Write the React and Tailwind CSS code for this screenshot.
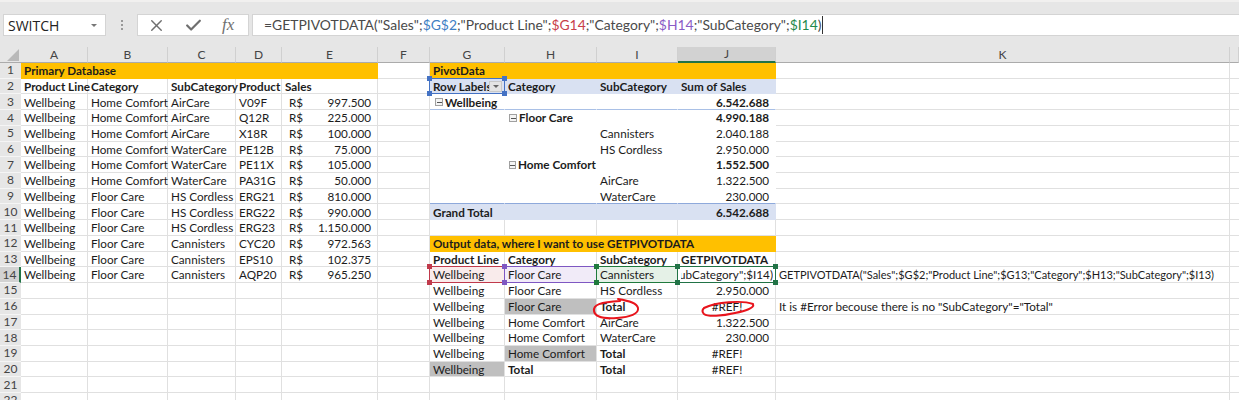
import React from 'react';
import { X, Check } from 'lucide-react';

const COLS = ['A', 'B', 'C', 'D', 'E', 'F', 'G', 'H', 'I', 'J', 'K', ''];
const YELLOW = 'bg-[#ffc000] border-b-[#ffc000] border-r-[#ffc000]';
const PIVOT = 'bg-[#d9e1f2] border-b-[#d9e1f2] border-r-[#d9e1f2]';
const BLANK = 'border-b-white border-r-white';
const GRAY = 'bg-[#bfbfbf]';

const left = [
  ['Wellbeing', 'Home Comfort', 'AirCare', 'V09F', '997.500'],
  ['Wellbeing', 'Home Comfort', 'AirCare', 'Q12R', '225.000'],
  ['Wellbeing', 'Home Comfort', 'AirCare', 'X18R', '100.000'],
  ['Wellbeing', 'Home Comfort', 'WaterCare', 'PE12B', '75.000'],
  ['Wellbeing', 'Home Comfort', 'WaterCare', 'PE11X', '105.000'],
  ['Wellbeing', 'Home Comfort', 'WaterCare', 'PA31G', '50.000'],
  ['Wellbeing', 'Floor Care', 'HS Cordless', 'ERG21', '810.000'],
  ['Wellbeing', 'Floor Care', 'HS Cordless', 'ERG22', '990.000'],
  ['Wellbeing', 'Floor Care', 'HS Cordless', 'ERG23', '1.150.000'],
  ['Wellbeing', 'Floor Care', 'Cannisters', 'CYC20', '972.563'],
  ['Wellbeing', 'Floor Care', 'Cannisters', 'EPS10', '102.375'],
  ['Wellbeing', 'Floor Care', 'Cannisters', 'AQP20', '965.250'],
];

const Handle = ({ className }) => <span className={`absolute w-[5px] h-[5px] z-10 ${className}`} />;

// four corner squares of a range picked in the formula
const Handles = ({ color }) => (
  <>
    <Handle className={`-left-[3px] -top-[3px] ${color}`} />
    <Handle className={`-right-[3px] -top-[3px] ${color}`} />
    <Handle className={`-left-[3px] -bottom-[3px] ${color}`} />
    <Handle className={`-right-[3px] -bottom-[3px] ${color}`} />
  </>
);

const Cell = ({ children, className = '' }) => (
  <div
    className={`flex items-center whitespace-nowrap pl-[3px] pr-[2px] pt-[1px] border-r border-b border-[#e0e0e0] text-[11.7px] text-[#1c1c1c] ${className}`}
  >
    {children}
  </div>
);

const Minus = () => (
  <span className="inline-flex items-center justify-center w-[8px] h-[8px] mr-[2px] border border-[#a0a0a0] bg-[#f4f4f4]">
    <span className="w-[5px] h-px bg-[#555]" />
  </span>
);

const Num = ({ children, bold }) => (
  <Cell className={`justify-end pr-[6px] ${bold ? 'font-bold' : ''}`}>{children}</Cell>
);

function pivotRow(n) {
  const line = 'border-b-[#a9c0e6]';
  const rows = {
    3: [<><Minus /><span className="font-bold">Wellbeing</span></>, '', '', '6.542.688', true],
    4: ['', <><Minus /><span className="font-bold">Floor Care</span></>, '', '4.990.188', true],
    5: ['', '', 'Cannisters', '2.040.188', false],
    6: ['', '', 'HS Cordless', '2.950.000', false],
    7: ['', <><Minus /><span className="font-bold">Home Comfort</span></>, '', '1.552.500', true],
    8: ['', '', 'AirCare', '1.322.500', false],
    9: ['', '', 'WaterCare', '230.000', false],
  };
  const [g, h, i, j, bold] = rows[n];
  const b = n === 3 ? `border-r-white ${line}` : n === 9 ? 'border-r-white border-b-[#8ea9db]' : BLANK;
  return [
    <Cell key="g" className={`${b} pl-[5px]`}>{g}</Cell>,
    <Cell key="h" className={`${b} pl-[4px]`}>{h}</Cell>,
    <Cell key="i" className={`${b} pl-[2px]`}>{i}</Cell>,
    <Cell key="j" className={`${b} justify-end pr-[6px] ${bold ? 'font-bold' : ''}`}>{j}</Cell>,
  ];
}

function outputRow(n) {
  const rows = {
    15: ['Wellbeing', 'Floor Care', 'HS Cordless', '2.950.000'],
    16: ['Wellbeing', 'Floor Care', 'Total', '#REF!'],
    17: ['Wellbeing', 'Home Comfort', 'AirCare', '1.322.500'],
    18: ['Wellbeing', 'Home Comfort', 'WaterCare', '230.000'],
    19: ['Wellbeing', 'Home Comfort', 'Total', '#REF!'],
    20: ['Wellbeing', 'Total', 'Total', '#REF!'],
  };
  const [g, h, i, j] = rows[n];
  return [
    <Cell key="g" className={n === 20 ? GRAY : ''}>{g}</Cell>,
    <Cell key="h" className={`pl-[2px] ${n === 16 || n === 19 ? GRAY : ''} ${h === 'Total' ? 'font-bold' : ''}`}>{h}</Cell>,
    <Cell key="i" className={`pl-[2px] ${i === 'Total' ? 'font-bold' : ''}`}>{i}</Cell>,
    j === '#REF!' ? (
      <Cell key="j" className="justify-center">{j}</Cell>
    ) : (
      <Num key="j">{j}</Num>
    ),
  ];
}

function rightSide(n) {
  if (n === 1) {
    return [
      <Cell key="g" className={`${YELLOW} font-bold`}>PivotData</Cell>,
      <Cell key="h" className={YELLOW} />,
      <Cell key="i" className={YELLOW} />,
      <Cell key="j" className={YELLOW} />,
    ];
  }
  if (n === 2) {
    return [
      <Cell key="g" className={`${PIVOT} relative font-bold`}>
        <span className="w-[58px] overflow-hidden">Row Labels</span>
        <span className="absolute right-[2px] top-[2px] w-[13px] h-[11px] flex items-center justify-center bg-[#e4e4e4] border border-[#c8c8c8]">
          <span className="border-x-[3px] border-x-transparent border-t-[3px] border-t-[#666]" />
        </span>
        <span className="absolute -left-px -top-px -right-px -bottom-px border border-[#4472c4]" />
        <Handles color="bg-[#4472c4]" />
      </Cell>,
      <Cell key="h" className={`${PIVOT} pl-[2px] font-bold`}>Category</Cell>,
      <Cell key="i" className={`${PIVOT} pl-[2px] font-bold`}>SubCategory</Cell>,
      <Cell key="j" className={`${PIVOT} pl-[2px] font-bold`}>Sum of Sales</Cell>,
    ];
  }
  if (n >= 3 && n <= 9) return pivotRow(n);
  if (n === 10) {
    return [
      <Cell key="g" className={`${PIVOT} font-bold border-b-[#8ea9db]`}>Grand Total</Cell>,
      <Cell key="h" className={`${PIVOT} border-b-[#8ea9db]`} />,
      <Cell key="i" className={`${PIVOT} border-b-[#8ea9db]`} />,
      <Cell key="j" className={`${PIVOT} border-b-[#8ea9db] justify-end pr-[6px] font-bold`}>6.542.688</Cell>,
    ];
  }
  if (n === 12) {
    return [
      <Cell key="g" className={`${YELLOW} relative z-10 font-bold text-[11.2px]`}>Output data, where I want to use GETPIVOTDATA</Cell>,
      <Cell key="h" className={YELLOW} />,
      <Cell key="i" className={YELLOW} />,
      <Cell key="j" className={YELLOW} />,
    ];
  }
  if (n === 13) {
    return [
      <Cell key="g" className="font-bold">Product Line</Cell>,
      <Cell key="h" className="pl-[2px] font-bold">Category</Cell>,
      <Cell key="i" className="pl-[2px] font-bold">SubCategory</Cell>,
      <Cell key="j" className="pl-[2px] font-bold">GETPIVOTDATA</Cell>,
    ];
  }
  if (n === 14) {
    return [
      <Cell key="g" className="relative bg-[#f9ebeb]">
        Wellbeing
        <span className="absolute -left-px -top-px -right-px -bottom-px border-[1.5px] border-[#c0394b]" />
        <Handles color="bg-[#c0394b]" />
      </Cell>,
      <Cell key="h" className="relative pl-[2px] bg-[#f1ebf8]">
        Floor Care
        <span className="absolute -left-px -top-px -right-px -bottom-px border-[1.5px] border-[#7e57c2]" />
        <Handles color="bg-[#7e57c2]" />
      </Cell>,
      <Cell key="i" className="relative pl-[2px] bg-[#e5f1e7]">
        Cannisters
        <span className="absolute -left-px -top-px -right-px -bottom-px border-[1.5px] border-[#1f7a3d]" />
        <Handles color="bg-[#1f7a3d]" />
      </Cell>,
      <Cell key="j" className="relative justify-end pl-[2px] pr-[2px] text-[11.4px]">
        <span className="overflow-hidden flex justify-end w-full">
          <span className="shrink-0">{'=GETPIVOTDATA("Sales";$G$2;"Product Line";$G14;"Category";$H14;"SubCategory";$I14)'}</span>
        </span>
        <span className="absolute -left-px -top-px -right-px -bottom-px border-[1.5px] border-[#217346]" />
        <Handles color="bg-[#217346]" />
      </Cell>,
    ];
  }
  if (n >= 15 && n <= 20) return outputRow(n);
  return ['g', 'h', 'i', 'j'].map((k) => <Cell key={k} />);
}

function leftSide(n) {
  if (n === 1) {
    return [
      <Cell key="a" className={`${YELLOW} relative z-10 font-bold`}>Primary Database</Cell>,
      ...['b', 'c', 'd', 'e'].map((k) => <Cell key={k} className={YELLOW} />),
    ];
  }
  if (n === 2) {
    return ['Product Line', 'Category', 'SubCategory', 'Product', 'Sales'].map((t) => (
      <Cell key={t} className="font-bold">{t}</Cell>
    ));
  }
  const r = left[n - 3];
  if (!r) return ['a', 'b', 'c', 'd', 'e'].map((k) => <Cell key={k} />);
  return [
    <Cell key="a">{r[0]}</Cell>,
    <Cell key="b">{r[1]}</Cell>,
    <Cell key="c">{r[2]}</Cell>,
    <Cell key="d">{r[3]}</Cell>,
    <Cell key="e" className="justify-between pl-[7px] pr-[6px]">
      <span>R$</span>
      <span>{r[4]}</span>
    </Cell>,
  ];
}

function Formula() {
  return (
    <span className="text-[#4a4a4a]">
      {'=GETPIVOTDATA("Sales";'}
      <span className="text-[#3f7fc4]">$G$2</span>
      {';"Product Line";'}
      <span className="text-[#c8404a]">$G14</span>
      {';"Category";'}
      <span className="text-[#8a5cc6]">$H14</span>
      {';"SubCategory";'}
      <span className="text-[#1f8a4c]">$I14</span>
      {')'}
    </span>
  );
}

function Toolbar() {
  return (
    <div className="h-[47px] bg-[#e6e6e6] border-t-2 border-[#f1f0ef] pt-[12px] pb-[11px] flex">
      <div className="ml-[3px] w-[103px] bg-white border border-[#d4d4d4] flex items-center justify-between pl-[4px] pr-[8px] text-[14px] text-[#222] font-['Open_Sans',sans-serif]">
        SWITCH
        <span className="border-x-[3px] border-x-transparent border-t-[3px] border-t-[#777]" />
      </div>
      <div className="w-[31px] flex flex-col items-center justify-center gap-[2px]">
        <span className="w-[2px] h-[2px] bg-[#999]" />
        <span className="w-[2px] h-[2px] bg-[#999]" />
        <span className="w-[2px] h-[2px] bg-[#999]" />
      </div>
      <div className="w-[112px] bg-white border border-[#d4d4d4] flex items-center pl-[9px] text-[#6f6f6f]">
        <X size={19} strokeWidth={1.8} />
        <Check size={19} strokeWidth={2.8} className="ml-[18px]" />
        <span className="ml-[19px] text-[17px] italic font-['Liberation_Serif',serif]">fx</span>
      </div>
      <div className="ml-[3px] flex-1 bg-white border-y border-l border-[#d4d4d4] flex items-center pl-[11px] text-[13.9px]">
        <Formula />
        <span className="ml-px w-px h-[18px] bg-[#333]" />
      </div>
    </div>
  );
}

export default function App() {
  const rows = Array.from({ length: 22 }, (_, i) => i + 1);
  return (
    <div className="relative w-[1239px] h-[400px] overflow-hidden bg-white font-['Lato','Noto_Sans',sans-serif]">
      <Toolbar />
      <div className="grid grid-cols-[21px_67px_80px_68px_46px_96px_52px_75px_92px_81px_98px_454px_9px] grid-rows-[16px_repeat(22,15.72px)]">
        <div className="bg-[#e6e6e6] border-b border-[#ababab] flex items-end justify-end pr-[2px] pb-[1px]">
          <span className="w-0 h-0 border-l-[12px] border-l-transparent border-b-[12px] border-b-[#b9b9b9]" />
        </div>
        {COLS.map((c, i) => (
          <div
            key={i}
            className={`flex items-center justify-center text-[12px] text-[#444] border-r border-[#d0d0d0] ${
              c === 'J'
                ? 'bg-[#d2d2d2] border-b-2 border-b-[#217346]'
                : 'bg-[#e6e6e6] border-b border-b-[#ababab]'
            }`}
          >
            {c}
          </div>
        ))}
        {rows.map((n) => (
          <React.Fragment key={n}>
            <div
              className={`flex items-center justify-center text-[12px] text-[#444] border-b border-[#f5f5f5] ${
                n === 14 ? 'bg-[#d2d2d2] border-r-2 border-r-[#217346]' : 'bg-[#e6e6e6]'
              }`}
            >
              {n}
            </div>
            {leftSide(n)}
            <Cell />
            {rightSide(n)}
            {n === 14 ? (
              <Cell className="pl-[2px] text-[11px]">{'GETPIVOTDATA("Sales";$G$2;"Product Line";$G13;"Category";$H13;"SubCategory";$I13)'}</Cell>
            ) : n === 16 ? (
              <Cell className="text-[11.3px]">{'It is #Error becouse there is no "SubCategory"="Total"'}</Cell>
            ) : (
              <Cell />
            )}
            <Cell className="border-r-0" />
          </React.Fragment>
        ))}
      </div>
      {/* pen marks over the sheet */}
      <svg className="absolute left-0 top-0 pointer-events-none" width="1239" height="400" fill="none" stroke="#e8141c" strokeWidth="2" strokeLinecap="round">
        <path d="M618 299 C630 301 637 303 638 308 C639 314 630 317 617 318 C603 319 595 317 594 311 C593 305 600 302 620 301" />
        <path d="M704 308 C716 302 742 300 753 304 C755 308 745 311 735 313 C722 316 708 317 704 314 C702 312 702 310 704 308" />
      </svg>
    </div>
  );
}
